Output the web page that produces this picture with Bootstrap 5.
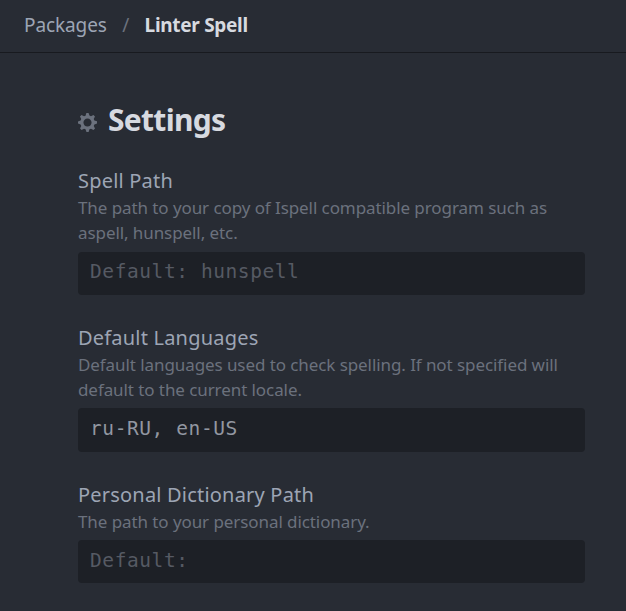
<!DOCTYPE html>
<html lang="en" data-bs-theme="dark">
<head>
<meta charset="utf-8">
<meta name="viewport" content="width=device-width, initial-scale=1">
<title>Linter Spell</title>
<link href="https://cdn.jsdelivr.net/npm/bootstrap@5.3.0/dist/css/bootstrap.min.css" rel="stylesheet">
<style>
body{background:#282c34;color:#9da5b4;font-family:"Noto Sans","Open Sans",sans-serif;height:611px;overflow:hidden}
.pkg-bar{height:53px;border-bottom:1px solid #181a1f;padding:0 24px 2px;font-size:19px;--bs-breadcrumb-divider-color:#6b717d;--bs-breadcrumb-item-active-color:#d7dae0;--bs-breadcrumb-item-padding-x:15.5px}
.pkg-bar a{color:#9da5b4;letter-spacing:-.1px}
.pkg-bar .active{font-weight:700;letter-spacing:-.3px}
.pkg-bar .active::before{font-weight:400}
.settings-panel{width:585px;padding:45px 0 0 78px}
.settings-title{font-size:30px;line-height:44px;font-weight:700;color:#d7dae0;letter-spacing:-.7px;gap:11px;margin-bottom:25.4px}
.settings-title svg{margin-top:4px}
.setting{margin-bottom:28.7px}
.setting-name{font-size:20px;line-height:28px;margin:0;display:block;letter-spacing:.2px}
.setting-note{font-size:17px;line-height:25px;color:#6b717d;margin:0 0 6.3px;letter-spacing:-.08px}
.setting .form-control{height:43.6px;background:#1d2026;border:0;border-radius:4px;padding:0 12px 3px;font:19.5px "DejaVu Sans Mono",monospace;letter-spacing:.58px;color:#9297a1;box-shadow:none}
.setting .form-control::placeholder{color:#565a63;opacity:1}
</style>
<script src="https://cdn.jsdelivr.net/npm/bootstrap@5.3.0/dist/js/bootstrap.bundle.min.js"></script>
</head>
<body>
<nav class="pkg-bar breadcrumb d-flex align-items-center m-0" aria-label="breadcrumb">
<span class="breadcrumb-item"><a href="#" class="text-decoration-none">Packages</a></span>
<span class="breadcrumb-item active">Linter Spell</span>
</nav>
<main class="settings-panel">
<h1 class="settings-title d-flex align-items-center">
<svg width="19" height="19" viewBox="0 1 14 14" fill="#6b717d"><path d="M14 8.77v-1.600l-1.940-.64-.45-1.090.88-1.840-1.130-1.130-1.810.91-1.090-.45-.69-1.920h-1.600l-.63 1.940-1.110.45-1.840-.88-1.130 1.130.91 1.810-.45 1.090L0 7.230v1.590l1.940.64.45 1.090-.88 1.840 1.130 1.130 1.810-.91 1.090.45.69 1.920h1.590l.63-1.940 1.110-.45 1.840.88 1.130-1.130-.92-1.810.47-1.090L14 8.750v.02zM7 11c-1.660 0-3-1.340-3-3s1.340-3 3-3 3 1.340 3 3-1.340 3-3 3z"/></svg>
<span>Settings</span></h1>
<div class="setting">
<label class="setting-name" for="spellPath">Spell Path</label>
<p class="setting-note">The path to your copy of Ispell compatible program such as<br>aspell, hunspell, etc.</p>
<input id="spellPath" class="form-control" placeholder="Default: hunspell">
</div>
<div class="setting">
<label class="setting-name" for="languages">Default Languages</label>
<p class="setting-note">Default languages used to check spelling. If not specified will<br>default to the current locale.</p>
<input id="languages" class="form-control" value="ru-RU, en-US">
</div>
<div class="setting">
<label class="setting-name" for="dictionary">Personal Dictionary Path</label>
<p class="setting-note">The path to your personal dictionary.</p>
<input id="dictionary" class="form-control" placeholder="Default:">
</div>
</main>
</body>
</html>
